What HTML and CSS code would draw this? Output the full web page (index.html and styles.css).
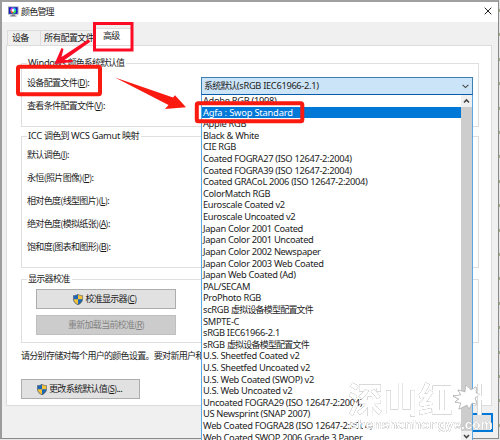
FILE: index.html
```html
<!DOCTYPE html>
<html lang="zh-CN">
<head>
<meta charset="utf-8">
<title>颜色管理</title>
<link rel="stylesheet" href="styles.css">
</head>
<body>
<div class="window">
  <header class="titlebar">
    <svg class="app-icon" width="11" height="11" viewBox="0 0 11 11">
      <rect x="0" y="0.5" width="10.5" height="8" fill="#8b93a5"/>
      <rect x="1" y="1.3" width="8.5" height="6.4" fill="#1616c8"/>
      <circle cx="5.2" cy="4.5" r="2.9" fill="#19c9ee"/>
      <path d="M5.2 4.5V1.6A2.9 2.9 0 0 0 2.4 4.5z" fill="#e733d8"/>
      <path d="M5.2 4.5H2.4a2.9 2.9 0 0 0 2.8 2.9z" fill="#f24a35"/>
      <path d="M5.2 4.5V7.4A2.9 2.9 0 0 0 8.1 4.5z" fill="#35dc48"/>
      <circle cx="5" cy="4.4" r="1.3" fill="#fff"/>
      <path d="M3.5 8.5h3.5v1h1.5v1h-6.500v-1h1.500z" fill="#777d88"/>
    </svg>
    <h1>颜色管理</h1>
    <svg class="close" width="8" height="8" viewBox="0 0 8 8"><path d="M.7.7l6.600 6.600M7.300.7L.7 7.300" stroke="#222" stroke-width="1"/></svg>
  </header>
  <nav class="tabs">
    <span class="tab first">设备</span><span class="tab wide">所有配置文件</span><span class="tab active">高级</span>
  </nav>
  <main class="page">
    <fieldset class="defaults">
      <legend><span class="latin">Windows </span><span class="tight">颜色系统默认值</span></legend>
      <div class="row">设备配置文件(<u>D</u>):</div>
      <div class="row">查看条件配置文件(<u>V</u>):</div>
    </fieldset>
    <fieldset class="mapping">
      <legend><span class="latin">ICC </span>调色到<span class="latin"> WCS Gamut </span>映射</legend>
      <div class="row">默认调色(<u>I</u>):</div>
      <div class="row">永恒(照片图像)(<u>P</u>):</div>
      <div class="row">相对色度(线型图片)(<u>L</u>):</div>
      <div class="row">绝对色度(模拟纸张)(<u>A</u>):</div>
      <div class="row">饱和度(图表和图形)(<u>B</u>):</div>
    </fieldset>
    <fieldset class="calibration">
      <legend>显示器校准</legend>
      <div class="button"><svg class="shield" width="10" height="11" viewBox="0 0 10 11"><path d="M5 .3C3.700 1.200 2 1.700.4 1.600V5C.4 8 3 10 5 10.700z" fill="#1c67b8"/><path d="M5 .3C6.300 1.200 8 1.700 9.600 1.600V5C9.600 8 7 10 5 10.700z" fill="#f6c23a"/><path d="M5 5.200H9.600C9.400 8 7 10 5 10.700z" fill="#1c67b8"/><path d="M5 5.200H.4C.6 8 3 10 5 10.700z" fill="#f6c23a"/><path d="M5 .3C3.700 1.200 2 1.700.4 1.600V5C.4 8 3 10 5 10.700 7 10 9.600 8 9.600 5V1.600C8 1.700 6.300 1.200 5 .3z" fill="none" stroke="#4b5563" stroke-width=".6"/></svg>校准显示器(<u>C</u>)</div>
      <div class="button disabled">重新加载当前校准(<u>R</u>)</div>
    </fieldset>
    <p class="note">请分别存储对每个用户的颜色设置。要对新用户和</p>
    <div class="button change"><svg class="shield" width="10" height="11" viewBox="0 0 10 11"><path d="M5 .3C3.700 1.200 2 1.700.4 1.600V5C.4 8 3 10 5 10.700z" fill="#1c67b8"/><path d="M5 .3C6.300 1.200 8 1.700 9.600 1.600V5C9.600 8 7 10 5 10.700z" fill="#f6c23a"/><path d="M5 5.200H9.600C9.400 8 7 10 5 10.700z" fill="#1c67b8"/><path d="M5 5.200H.4C.6 8 3 10 5 10.700z" fill="#f6c23a"/><path d="M5 .3C3.700 1.200 2 1.700.4 1.600V5C.4 8 3 10 5 10.700 7 10 9.600 8 9.600 5V1.600C8 1.700 6.300 1.200 5 .3z" fill="none" stroke="#4b5563" stroke-width=".6"/></svg>更改系统默认值(<u>S</u>)...</div>
  </main>
  <footer class="footer"><div class="close-button"></div></footer>
</div>

<div class="combo">
  <div class="combo-value"><span><span class="cjk">系统默认</span>(sRGB IEC61966-2.1)</span>
    <svg width="7" height="5" viewBox="0 0 7 5"><path d="M.6.8l2.900 2.800L6.400.8" fill="none" stroke="#444" stroke-width="1.100"/></svg>
  </div>
  <div class="combo-list">
    <ul>
      <li>Adobe RGB (1998)</li>
      <li class="selected">Agfa : Swop Standard</li>
      <li>Apple RGB</li>
      <li>Black &amp; White</li>
      <li>CIE RGB</li>
      <li>Coated FOGRA27 (ISO 12647-2:2004)</li>
      <li>Coated FOGRA39 (ISO 12647-2:2004)</li>
      <li>Coated GRACoL 2006 (ISO 12647-2:2004)</li>
      <li>ColorMatch RGB</li>
      <li>Euroscale Coated v2</li>
      <li>Euroscale Uncoated v2</li>
      <li>Japan Color 2001 Coated</li>
      <li>Japan Color 2001 Uncoated</li>
      <li>Japan Color 2002 Newspaper</li>
      <li>Japan Color 2003 Web Coated</li>
      <li>Japan Web Coated (Ad)</li>
      <li>PAL/SECAM</li>
      <li>ProPhoto RGB</li>
      <li>scRGB <span class="cjk">虚拟设备模型配置文件</span></li>
      <li>SMPTE-C</li>
      <li>sRGB IEC61966-2.1</li>
      <li>sRGB <span class="cjk">虚拟设备模型配置文件</span></li>
      <li>U.S. Sheetfed Coated v2</li>
      <li>U.S. Sheetfed Uncoated v2</li>
      <li>U.S. Web Coated (SWOP) v2</li>
      <li>U.S. Web Uncoated v2</li>
      <li>Uncoated FOGRA29 (ISO 12647-2:2004)</li>
      <li>US Newsprint (SNAP 2007)</li>
      <li>Web Coated FOGRA28 (ISO 12647-2:2004)</li>
      <li>Web Coated SWOP 2006 Grade 3 Paper</li>
    </ul>
    <div class="scrollbar">
      <svg width="11" height="12" viewBox="0 0 11 12"><path d="M3 7.500l2.500-2.600L8 7.500" fill="none" stroke="#444" stroke-width="1.500"/></svg>
      <div class="thumb"></div>
      <svg width="11" height="9" viewBox="0 0 11 9"><path d="M3 4l2.500 2.600L8 4" fill="none" stroke="#444" stroke-width="1.500"/></svg>
    </div>
  </div>
</div>

<svg class="marks" width="500" height="440" viewBox="0 0 500 440">
  <rect x="94.500" y="23.500" width="37.500" height="26.500" fill="none" stroke="#fb0b24" stroke-width="3"/>
  <path d="M88.500 39.200L90.300 41.700 64.500 60 72.500 60 72.800 62 54.500 64 61.500 48 63.500 49 61.500 57z" fill="#fb0b24"/>
  <rect x="18" y="66.700" width="82" height="27.500" rx="1.500" fill="none" stroke="#fb1a10" stroke-width="4"/>
  <path d="M115 77.600L173 97.500 175 95.300 186 107.300 165 109 168.500 105z" fill="#fb1a10"/>
  <rect x="196.800" y="103.200" width="105.500" height="18" rx="1.500" fill="none" stroke="#fb1a10" stroke-width="4"/>
</svg>

<div class="watermark">
  <div class="wm-name"><span>深山红</span><svg width="40" height="38" viewBox="0 0 40 38"><path class="stem" d="M29.500 3v31M29.500 17h8.500"/><path class="leaf" d="M3 15l8-1-3-5 7 2 1-7 5 5 5-3v6l4 1-5 4 2 6-5-1-3 6-2-4-8 4 2-6-6-1 4-3z"/></svg></div>
  <div class="wm-site">shenshanhongye.com</div>
</div>
</body>
</html>
```
FILE: styles.css
```css
* { box-sizing: border-box; }
body {
  margin: 0;
  width: 500px;
  height: 440px;
  overflow: hidden;
  position: relative;
  background: repeating-linear-gradient(#e6e6e6 0 9px, #9fae88 9px 12px, #e6e6e6 12px 24.400px);
  color: #1c1c1c;
  font: 9px/12px "Noto Sans CJK SC", sans-serif;
  letter-spacing: -.7px;
}
u { text-underline-offset: 1px; text-decoration-thickness: .7px; }
.latin { font: 9.300px/1 "Noto Sans", sans-serif; letter-spacing: -.3px; }
.tight { letter-spacing: -.95px; }
.window {
  width: 499px;
  height: 439px;
  border: 1px solid #8a8a8a;
  border-top: 2px solid #a0a0a0;
  border-left: 2px solid #9c9c9c;
  background: #f0f0f0;
  display: flex;
  flex-direction: column;
}
.titlebar {
  height: 20px;
  background: #fff;
  display: flex;
  align-items: center;
  padding: 0 6px 0 6px;
}
.titlebar h1 { margin: 0 auto 0 2px; font-size: 9px; font-weight: 400; line-height: 12px; letter-spacing: -.8px; }
.app-icon { margin-top: -1px; }
.close { margin-top: -2px; }
.tabs { height: 23px; display: flex; align-items: flex-end; padding-left: 5px; }
.tab { height: 15px; border: 1px solid #dcdcdc; border-bottom: 0; padding-left: 4px; line-height: 13px; }
.tab.first { width: 34px; }
.tab.wide { width: 54px; border-left: 0; padding-left: 3px; white-space: nowrap; }
.tab.active { height: 17px; width: 37px; background: #fff; padding-left: 7px; line-height: 13px; }
.page {
  height: 361px;
  width: 486px;
  margin-left: 4px;
  background: #fff;
  border: 1px solid #dcdcdc;
  padding: 11px 12px 0 14px;
}
fieldset {
  margin: 0;
  padding: 0 0 0 5px;
  border: 1px solid #dfdfdf;
  min-width: 0;
}
legend { padding: 0 2px 0 1px; height: 12px; }
.row { height: 23.100px; line-height: 23px; letter-spacing: -.67px; }
.defaults { height: 70px; padding-top: 2px; }
.mapping { height: 138px; margin-top: 3px; padding-top: 1px; }
.calibration { height: 70px; margin-top: 5px; }
.button {
  width: 140px;
  height: 20px;
  background: #e1e1e1;
  border: 1px solid #adadad;
  display: flex;
  align-items: center;
  justify-content: center;
}
.calibration .button { margin: 4px 0 6px 9px; }
.calibration .disabled { background: #ccc; border-color: #bfbfbf; color: #838383; margin-bottom: 0; }
.shield { margin-right: 2px; margin-left: -2px; flex: none; }
.note { margin: 7px 0 17px; white-space: nowrap; }
.change { width: 119px; }
.footer { flex: 1; display: flex; justify-content: flex-end; padding: 7px 5px 0 0; }
.close-button { width: 80px; height: 19px; background: #e1e1e1; border: 2px solid #0078d7; }

.combo {
  position: absolute;
  left: 201px;
  top: 77px;
  width: 272px;
  height: 363px;
  font: 9.300px/11.610px "Noto Sans", "Noto Sans CJK SC", sans-serif;
  letter-spacing: -.32px;
}
.cjk { font-family: "Noto Sans CJK SC", sans-serif; font-size: 9px; letter-spacing: -.8px; line-height: 1; }
.combo-value {
  height: 18px;
  border: 1px solid #3c7fb1;
  border-bottom-color: #0a5aa5;
  background: #cce4f7;
  display: flex;
  align-items: center;
  justify-content: space-between;
  padding: 0 3px 0 2px;
}
.combo-list {
  height: 345px;
  display: flex;
  background: #fff;
  border: 1px solid #5aa9e6;
  border-width: 0 1px;
  overflow: hidden;
}
.combo-list ul { flex: 1; margin: 0; padding: 0; list-style: none; white-space: nowrap; }
.combo-list li { height: 11.610px; padding-left: 1px; }
.combo-list .selected { background: #0078d7; color: #fff; letter-spacing: -.18px; }
.scrollbar { width: 11px; display: flex; flex-direction: column; background: #f0f0f0; }
.thumb { flex: 1; background: #cdcdcd; }

.marks { position: absolute; left: 0; top: 0; }

.watermark {
  position: absolute;
  left: 348px;
  top: 381px;
  width: 148px;
  color: #fff;
  filter: drop-shadow(0 0 .5px #999) drop-shadow(0 0 .7px #bbb);
}
.wm-name { display: flex; height: 36px; font: 700 35px/34px "Noto Sans CJK SC", sans-serif; letter-spacing: 0; }
.wm-name svg { margin-left: -3px; flex: none; }
.leaf { fill: #fff; stroke: #bbb; stroke-width: .5; }
.stem { fill: none; stroke: #fff; stroke-width: 4; }
.wm-site { padding-left: 2px; font: 700 13.600px/16px "Liberation Sans", sans-serif; letter-spacing: -.05px; }
```
